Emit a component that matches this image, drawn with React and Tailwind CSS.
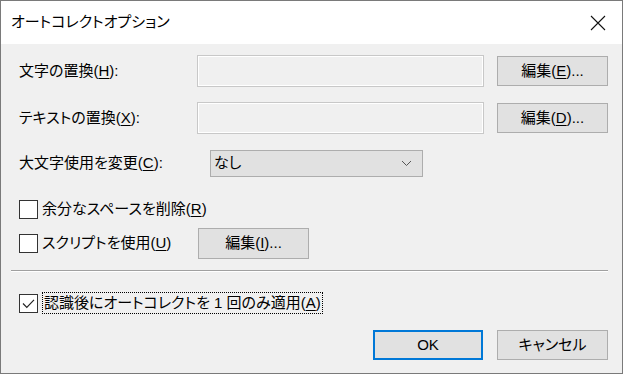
import React from "react";

const font = { fontFamily: "'Liberation Sans', 'Noto Sans CJK JP', sans-serif" };

function Mn({ pre, k, post = "" }) {
  return (
    <span>
      {pre}(<span className="underline underline-offset-2">{k}</span>){post}
    </span>
  );
}

function Btn({ children, className = "", primary = false }) {
  return (
    <div
      className={`flex items-center justify-center bg-[#e1e1e1] text-[15px] text-black ${
        primary ? "border-2 border-[#0078d7]" : "border border-[#adadad]"
      } ${className}`}
    >
      {children}
    </div>
  );
}

function Box({ checked = false }) {
  return (
    <div className="w-[19px] h-[19px] border border-[#333333] bg-white flex items-center justify-center shrink-0">
      {checked && (
        <svg width="15" height="15" viewBox="0 0 15 15">
          <path d="M2 7.5 L5.8 11.3 L13 3.8" fill="none" stroke="#222" strokeWidth="1.2" />
        </svg>
      )}
    </div>
  );
}

function Field() {
  return (
    <div className="w-[287px] h-[32px] border border-[#c8c8c8] bg-[#f0f0f0] shadow-[inset_0_0_0_1px_#ffffff]" />
  );
}

export default function App() {
  return (
    <div
      style={font}
      className="w-[623px] h-[374px] border border-[#7a7a7a] flex flex-col bg-[#f0f0f0] text-black [font-feature-settings:'palt']"
    >
      {/* title bar */}
      <div className="h-[43px] bg-white flex items-center justify-between pl-[10px] pr-[16px]">
        <span className="text-[15px]">オートコレクトオプション</span>
        <svg width="16" height="16" viewBox="0 0 16 16">
          <path d="M1 1 L15 15 M15 1 L1 15" stroke="#111" strokeWidth="1.1" />
        </svg>
      </div>

      {/* body */}
      <div className="flex-1 flex flex-col pl-[18px] pr-[14px] text-[15px]">
        <div className="flex items-center mt-[11px]">
          <div className="w-[178px]"><Mn pre="文字の置換" k="H" post=":" /></div>
          <Field />
          <Btn className="ml-[13px] w-[111px] h-[30px]"><Mn pre="編集" k="E" post="..." /></Btn>
        </div>

        <div className="flex items-center mt-[15px]">
          <div className="w-[178px]"><Mn pre="テキストの置換" k="X" post=":" /></div>
          <Field />
          <Btn className="ml-[13px] w-[111px] h-[30px]"><Mn pre="編集" k="D" post="..." /></Btn>
        </div>

        <div className="flex items-center mt-[16px]">
          <div className="w-[191px]"><Mn pre="大文字使用を変更" k="C" post=":" /></div>
          <div className="w-[213px] h-[27px] border border-[#adadad] bg-[#e1e1e1] flex items-center justify-between pl-[3px] pr-[10px]">
            <span>なし</span>
            <svg width="11" height="7" viewBox="0 0 11 7">
              <path d="M1 1 L5.5 5.5 L10 1" fill="none" stroke="#555" strokeWidth="1" />
            </svg>
          </div>
        </div>

        <div className="flex items-center mt-[23px] h-[19px]">
          <Box />
          <span className="ml-[4px]"><Mn pre="余分なスペースを削除" k="R" /></span>
        </div>

        <div className="flex items-center mt-[9px] h-[31px]">
          <Box />
          <span className="ml-[4px] w-[156px]"><Mn pre="スクリプトを使用" k="U" /></span>
          <Btn className="w-[111px] h-[31px]"><Mn pre="編集" k="I" post="..." /></Btn>
        </div>

        <div className="mt-[11px] -ml-[8px] h-[2px] border-t border-[#a0a0a0] border-b border-b-white" />

        <div className="flex items-center mt-[20px] h-[22px]">
          <Box checked />
          <span className="ml-[4px] px-[1px] h-[22px] flex items-center border border-dotted border-black">
            <Mn pre="認識後にオートコレクトを 1 回のみ適用" k="A" />
          </span>
        </div>

        <div className="flex justify-end gap-[14px] mt-[16px]">
          <Btn primary className="w-[110px] h-[30px]">OK</Btn>
          <Btn className="w-[111px] h-[30px]">キャンセル</Btn>
        </div>
      </div>
    </div>
  );
}
